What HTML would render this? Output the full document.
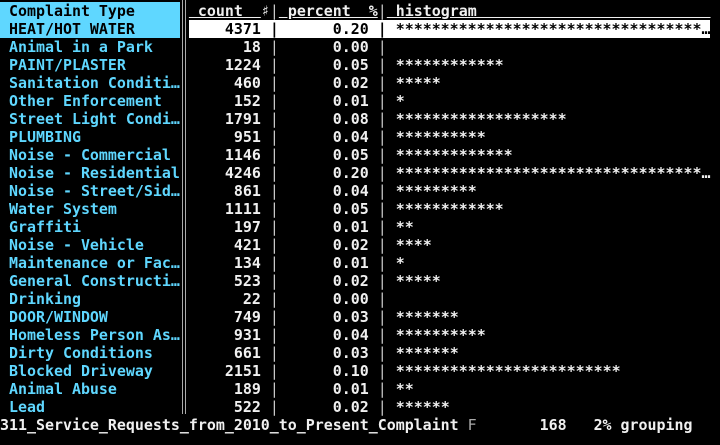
<!DOCTYPE html>
<html><head><meta charset="utf-8"><style>
html,body{margin:0;padding:0;background:#000;width:720px;height:445px;overflow:hidden}
.t{font-family:"DejaVu Sans Mono","Liberation Mono",monospace;font-weight:bold;font-size:14.95px;line-height:18px;color:#f0f0f0;padding-top:2px}
.l{height:18px;white-space:pre}
.n{color:#5fd7ff}
.h{background:#5fd7ff;color:#000}
.w{background:#fff;color:#000}
.s{color:#c8c8c8;font-weight:normal}
.d{display:inline-block;width:9px;height:18px;vertical-align:top;position:relative;margin-top:-2px}
.d::before,.d::after{content:"";position:absolute;top:0;bottom:0;width:1px;background:#aaa}
.d::before{left:2px}.d::after{left:5px}
.sh{display:inline-block;width:9px;overflow:hidden;text-align:center;vertical-align:top}
.u{text-decoration:underline}
.f{color:#aaa;font-weight:normal}
</style></head><body><div class="t">
<div class="l"><span class="h"> Complaint Type     </span><span class="d"></span><span class="u"> count  <span class="sh">♯</span></span><span class="s">|</span><span class="u"> percent  %</span><span class="s">|</span><span class="u"> histogram                          </span></div>
<div class="l"><span class="h"> HEAT/HOT WATER     </span><span class="d"></span><span class="w">    4371 |      0.20 | **********************************…</span></div>
<div class="l"><span class="n"> Animal in a Park   </span><span class="d"></span>      18 <span class="s">|</span>      0.00 <span class="s">|</span></div>
<div class="l"><span class="n"> PAINT/PLASTER      </span><span class="d"></span>    1224 <span class="s">|</span>      0.05 <span class="s">|</span> ************</div>
<div class="l"><span class="n"> Sanitation Conditi…</span><span class="d"></span>     460 <span class="s">|</span>      0.02 <span class="s">|</span> *****</div>
<div class="l"><span class="n"> Other Enforcement  </span><span class="d"></span>     152 <span class="s">|</span>      0.01 <span class="s">|</span> *</div>
<div class="l"><span class="n"> Street Light Condi…</span><span class="d"></span>    1791 <span class="s">|</span>      0.08 <span class="s">|</span> *******************</div>
<div class="l"><span class="n"> PLUMBING           </span><span class="d"></span>     951 <span class="s">|</span>      0.04 <span class="s">|</span> **********</div>
<div class="l"><span class="n"> Noise - Commercial </span><span class="d"></span>    1146 <span class="s">|</span>      0.05 <span class="s">|</span> *************</div>
<div class="l"><span class="n"> Noise - Residential</span><span class="d"></span>    4246 <span class="s">|</span>      0.20 <span class="s">|</span> **********************************…</div>
<div class="l"><span class="n"> Noise - Street/Sid…</span><span class="d"></span>     861 <span class="s">|</span>      0.04 <span class="s">|</span> *********</div>
<div class="l"><span class="n"> Water System       </span><span class="d"></span>    1111 <span class="s">|</span>      0.05 <span class="s">|</span> ************</div>
<div class="l"><span class="n"> Graffiti           </span><span class="d"></span>     197 <span class="s">|</span>      0.01 <span class="s">|</span> **</div>
<div class="l"><span class="n"> Noise - Vehicle    </span><span class="d"></span>     421 <span class="s">|</span>      0.02 <span class="s">|</span> ****</div>
<div class="l"><span class="n"> Maintenance or Fac…</span><span class="d"></span>     134 <span class="s">|</span>      0.01 <span class="s">|</span> *</div>
<div class="l"><span class="n"> General Constructi…</span><span class="d"></span>     523 <span class="s">|</span>      0.02 <span class="s">|</span> *****</div>
<div class="l"><span class="n"> Drinking           </span><span class="d"></span>      22 <span class="s">|</span>      0.00 <span class="s">|</span></div>
<div class="l"><span class="n"> DOOR/WINDOW        </span><span class="d"></span>     749 <span class="s">|</span>      0.03 <span class="s">|</span> *******</div>
<div class="l"><span class="n"> Homeless Person As…</span><span class="d"></span>     931 <span class="s">|</span>      0.04 <span class="s">|</span> **********</div>
<div class="l"><span class="n"> Dirty Conditions   </span><span class="d"></span>     661 <span class="s">|</span>      0.03 <span class="s">|</span> *******</div>
<div class="l"><span class="n"> Blocked Driveway   </span><span class="d"></span>    2151 <span class="s">|</span>      0.10 <span class="s">|</span> *************************</div>
<div class="l"><span class="n"> Animal Abuse       </span><span class="d"></span>     189 <span class="s">|</span>      0.01 <span class="s">|</span> **</div>
<div class="l"><span class="n"> Lead               </span><span class="d"></span>     522 <span class="s">|</span>      0.02 <span class="s">|</span> ******</div>
<div class="l">311_Service_Requests_from_2010_to_Present_Complaint <span class="f">F</span>       168   2% grouping</div>
</div></body></html>
